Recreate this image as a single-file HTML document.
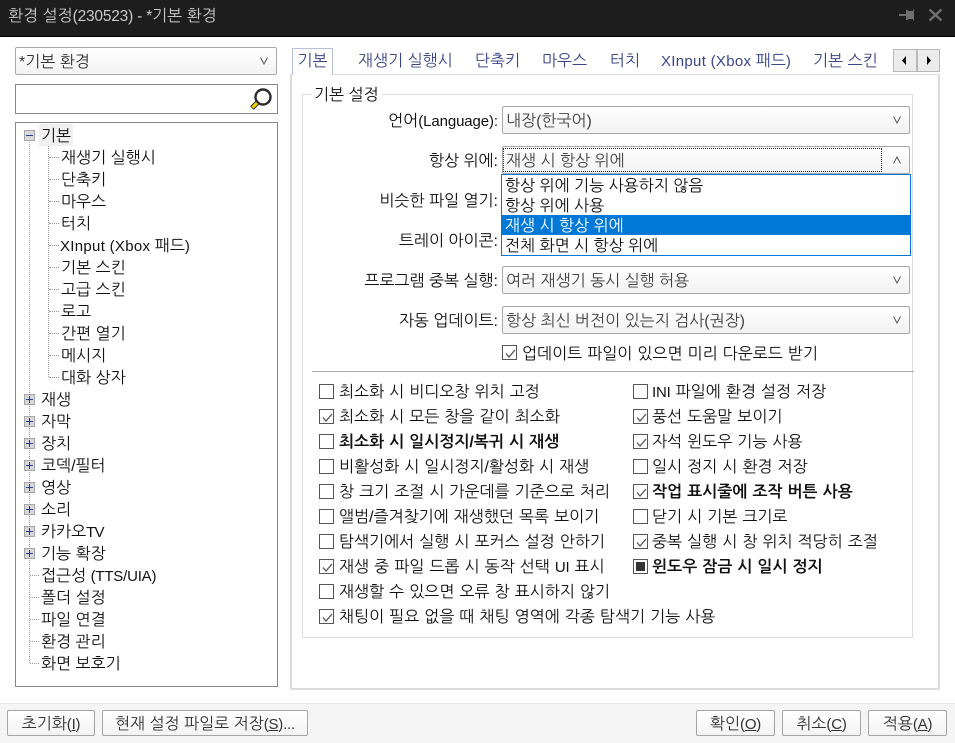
<!DOCTYPE html>
<html lang="ko"><head><meta charset="utf-8">
<style>
html,body{margin:0;padding:0;width:955px;height:743px;overflow:hidden;background:#fff}
body{position:relative;font-family:"Liberation Sans","NanumGothic","Noto Sans CJK KR",sans-serif;font-size:16px;color:#111}
div,span{position:absolute;box-sizing:border-box;white-space:nowrap}
i{font-style:normal;font-size:15px;letter-spacing:-.2px}
i.x{letter-spacing:.3px}
.t{height:22px;line-height:25px;word-spacing:.6px}
.tab{top:50px;height:22px;line-height:24px;color:#3a4688}
.combo{left:502px;width:408px;height:28px;border:1px solid #a9a9a9;border-radius:2px;background:linear-gradient(#fff,#f3f3f3);line-height:29px;padding-left:3px;color:#444}
.combo svg,.lc svg{position:absolute;top:9px;left:390px}
.lab{right:457px;height:22px;line-height:25px;color:#111}
.cb{width:15px;height:15px;border:1px solid #555;background:#fff}
.cb svg{position:absolute;left:1px;top:1px}
.b{font-weight:bold}
.tr{height:22px;line-height:25px}
.ex{left:24px;width:11px;height:11px;background:#d8d8d8;border:1px solid #a5a5a5}
.ex:before{content:"";position:absolute;left:1px;top:4px;width:7px;height:1px;background:#2040a0}
.ex.p:after{content:"";position:absolute;left:4px;top:1px;width:1px;height:7px;background:#2040a0}
.hd{border-top:1px dotted #999;height:1px}
.btn{top:710px;height:26px;border:1px solid #a5a5a5;border-radius:2px;background:linear-gradient(#fff,#f3f3f3);text-align:center;line-height:27px;color:#333}
.dd{left:502px;width:408px;height:20px;line-height:23px;padding-left:3px;color:#111}
u{text-decoration:underline}
</style></head><body>

<div style="left:0;top:0;width:955px;height:37px;background:#1d1d1d;border-bottom:1px solid #000"></div>
<div style="left:8px;top:5px;height:22px;line-height:24px;color:#c9c9c9;font-size:16px">환경 설정<i style="font-size:15.5px">(230523) - *</i>기본 환경</div>
<svg style="position:absolute;left:898px;top:9px" width="18" height="13" viewBox="0 0 18 13"><path d="M1 5h8v2H1z M8 1h2v1h5V0.5h1v11h-1V10h-5v1H8z" fill="#6f6f6f"/></svg>
<svg style="position:absolute;left:928px;top:8px" width="15" height="14" viewBox="0 0 15 14"><path d="M1.5 1.5L13.5 12.5M13.5 1.5L1.5 12.5" stroke="#6f6f6f" stroke-width="2.4" fill="none"/></svg>

<div style="left:0;top:703px;width:955px;height:40px;background:#f5f5f5;border-top:1px solid #e6e6e6"></div>

<!-- left -->
<div class="lc" style="left:15px;top:47px;width:262px;height:28px;border:1px solid #a9a9a9;border-radius:2px;background:linear-gradient(#fff,#f3f3f3);line-height:29px;padding-left:3px;color:#333">*기본 환경<svg style="left:244px" width="8" height="8"><path d="M.5 .5L4 7L7.5 .5" stroke="#555" fill="none"/></svg></div>
<div style="left:15px;top:84px;width:263px;height:30px;border:1px solid #888;background:#fff"></div>
<svg style="position:absolute;left:249px;top:87px" width="25" height="24" viewBox="0 0 25 24"><circle cx="14" cy="10" r="7.5" fill="#fff" stroke="#2c2c2c" stroke-width="2.4"/><path d="M8.5 15.5L3 21" stroke="#222" stroke-width="5"/><path d="M8 16L3.5 20.5" stroke="#f5d800" stroke-width="3"/></svg>
<div style="left:15px;top:122px;width:263px;height:565px;border:1px solid #888;background:#fff"></div>
<div style="left:39px;top:124px;width:34px;height:22px;background:#f0f0f0"></div>

<div style="left:29px;top:142px;width:1px;height:521px;border-left:1px dotted #999"></div>
<div style="left:48px;top:146px;width:1px;height:231px;border-left:1px dotted #999"></div>

<div class="hd" style="left:49px;top:157px;width:10px"></div>
<div class="hd" style="left:49px;top:179px;width:10px"></div>
<div class="hd" style="left:49px;top:201px;width:10px"></div>
<div class="hd" style="left:49px;top:223px;width:10px"></div>
<div class="hd" style="left:49px;top:245px;width:10px"></div>
<div class="hd" style="left:49px;top:267px;width:10px"></div>
<div class="hd" style="left:49px;top:289px;width:10px"></div>
<div class="hd" style="left:49px;top:311px;width:10px"></div>
<div class="hd" style="left:49px;top:333px;width:10px"></div>
<div class="hd" style="left:49px;top:355px;width:10px"></div>
<div class="hd" style="left:49px;top:377px;width:10px"></div>
<div class="hd" style="left:30px;top:575px;width:9px"></div>
<div class="hd" style="left:30px;top:597px;width:9px"></div>
<div class="hd" style="left:30px;top:619px;width:9px"></div>
<div class="hd" style="left:30px;top:641px;width:9px"></div>
<div class="hd" style="left:30px;top:663px;width:9px"></div>

<div class="ex" style="top:130px"></div>
<div class="ex p" style="top:394px"></div>
<div class="ex p" style="top:416px"></div>
<div class="ex p" style="top:438px"></div>
<div class="ex p" style="top:460px"></div>
<div class="ex p" style="top:482px"></div>
<div class="ex p" style="top:504px"></div>
<div class="ex p" style="top:526px"></div>
<div class="ex p" style="top:548px"></div>

<div class="tr" style="left:41px;top:124px">기본</div>
<div class="tr" style="left:61px;top:146px">재생기 실행시</div>
<div class="tr" style="left:61px;top:168px">단축키</div>
<div class="tr" style="left:61px;top:190px">마우스</div>
<div class="tr" style="left:61px;top:212px">터치</div>
<div class="tr" style="left:60px;top:234px"><i class="x">XInput (Xbox </i>패드<i>)</i></div>
<div class="tr" style="left:61px;top:256px">기본 스킨</div>
<div class="tr" style="left:61px;top:278px">고급 스킨</div>
<div class="tr" style="left:61px;top:300px">로고</div>
<div class="tr" style="left:61px;top:322px">간편 열기</div>
<div class="tr" style="left:61px;top:344px">메시지</div>
<div class="tr" style="left:61px;top:366px">대화 상자</div>
<div class="tr" style="left:41px;top:388px">재생</div>
<div class="tr" style="left:41px;top:410px">자막</div>
<div class="tr" style="left:41px;top:432px">장치</div>
<div class="tr" style="left:41px;top:454px">코덱/필터</div>
<div class="tr" style="left:41px;top:476px">영상</div>
<div class="tr" style="left:41px;top:498px">소리</div>
<div class="tr" style="left:41px;top:520px">카카오<i style="letter-spacing:-.8px">TV</i></div>
<div class="tr" style="left:41px;top:542px">기능 확장</div>
<div class="tr" style="left:41px;top:564px">접근성 <i>(TTS/UIA)</i></div>
<div class="tr" style="left:41px;top:586px">폴더 설정</div>
<div class="tr" style="left:41px;top:608px">파일 연결</div>
<div class="tr" style="left:41px;top:630px">환경 관리</div>
<div class="tr" style="left:41px;top:652px">화면 보호기</div>

<!-- tabs & panel -->
<div style="left:290px;top:74px;width:650px;height:616px;border:2px solid #dcdcdc;border-top-width:1px;background:#fff"></div>
<div style="left:292px;top:48px;width:41px;height:27px;border:1px solid #b5c0dc;border-bottom:0;background:#fff;text-align:center;line-height:25px;color:#3a4688">기본</div>
<div class="tab" style="left:358px">재생기 실행시</div>
<div class="tab" style="left:475px">단축키</div>
<div class="tab" style="left:542px">마우스</div>
<div class="tab" style="left:610px">터치</div>
<div class="tab" style="left:661px"><i class="x">XInput (Xbox </i>패드<i>)</i></div>
<div class="tab" style="left:813px">기본 스킨</div>
<div style="left:893px;top:49px;width:47px;height:23px;background:#ececec;border:1px solid #b8b8b8"></div>
<div style="left:916px;top:49px;width:2px;height:23px;background:#b8b8b8"></div>
<svg style="position:absolute;left:901px;top:55px" width="8" height="11"><path d="M5 1v9L1 5.5z" fill="#000"/></svg>
<svg style="position:absolute;left:925px;top:55px" width="8" height="11"><path d="M2 1v9L6 5.5z" fill="#000"/></svg>

<!-- group -->
<div style="left:302px;top:94px;width:611px;height:544px;border:1px solid #dcdcdc"></div>
<div style="left:311px;top:84px;height:22px;line-height:24px;background:#fff;padding:0 3px">기본 설정</div>

<div class="lab" style="top:109px">언어<i style="letter-spacing:-.1px">(Language):</i></div>
<div class="lab" style="top:149px">항상 위에:</div>
<div class="lab" style="top:189px">비슷한 파일 열기:</div>
<div class="lab" style="top:229px">트레이 아이콘:</div>
<div class="lab" style="top:269px">프로그램 중복 실행:</div>
<div class="lab" style="top:309px">자동 업데이트:</div>

<div class="combo" style="top:106px">내장(한국어)<svg width="8" height="8"><path d="M.5 .5L4 7L7.5 .5" stroke="#555" fill="none"/></svg></div>
<div class="combo" style="top:146px">재생 시 항상 위에<svg width="8" height="8"><path d="M.5 7.5L4 1L7.5 7.5" stroke="#555" fill="none"/></svg></div>
<div style="left:503px;top:148px;width:379px;height:24px;border:1px dotted #333"></div>
<div class="combo" style="top:266px">여러 재생기 동시 실행 허용<svg width="8" height="8"><path d="M.5 .5L4 7L7.5 .5" stroke="#555" fill="none"/></svg></div>
<div class="combo" style="top:306px">항상 최신 버전이 있는지 검사(권장)<svg width="8" height="8"><path d="M.5 .5L4 7L7.5 .5" stroke="#555" fill="none"/></svg></div>

<!-- dropdown -->
<div style="left:501px;top:174px;width:410px;height:82px;border:1px solid #0078d7;background:#fff"></div>
<div class="dd" style="top:175px">항상 위에 기능 사용하지 않음</div>
<div class="dd" style="top:195px">항상 위에 사용</div>
<div class="dd" style="top:215px;background:#0078d7;color:#fff">재생 시 항상 위에</div>
<div class="dd" style="top:235px">전체 화면 시 항상 위에</div>

<div class="cb" style="left:502px;top:345px"><svg width="13" height="13"><path d="M2 6.5L5 10L11 3" stroke="#555" stroke-width="1.3" fill="none"/></svg></div>
<div class="t" style="left:522px;top:342px">업데이트 파일이 있으면 미리 다운로드 받기</div>
<div style="left:312px;top:371px;width:602px;height:1px;background:#aaa"></div>

<!-- left col -->
<div class="cb" style="left:319px;top:384px"></div><div class="t" style="left:339px;top:380px">최소화 시 비디오창 위치 고정</div>
<div class="cb" style="left:319px;top:409px"><svg width="13" height="13"><path d="M2 6.5L5 10L11 3" stroke="#555" stroke-width="1.3" fill="none"/></svg></div><div class="t" style="left:339px;top:405px">최소화 시 모든 창을 같이 최소화</div>
<div class="cb" style="left:319px;top:434px"></div><div class="t b" style="left:339px;top:430px">최소화 시 일시정지/복귀 시 재생</div>
<div class="cb" style="left:319px;top:459px"></div><div class="t" style="left:339px;top:455px">비활성화 시 일시정지/활성화 시 재생</div>
<div class="cb" style="left:319px;top:484px"></div><div class="t" style="left:339px;top:480px">창 크기 조절 시 가운데를 기준으로 처리</div>
<div class="cb" style="left:319px;top:509px"></div><div class="t" style="left:339px;top:505px">앨범/즐겨찾기에 재생했던 목록 보이기</div>
<div class="cb" style="left:319px;top:534px"></div><div class="t" style="left:339px;top:530px">탐색기에서 실행 시 포커스 설정 안하기</div>
<div class="cb" style="left:319px;top:559px"><svg width="13" height="13"><path d="M2 6.5L5 10L11 3" stroke="#555" stroke-width="1.3" fill="none"/></svg></div><div class="t" style="left:339px;top:555px">재생 중 파일 드롭 시 동작 선택 <i>UI</i> 표시</div>
<div class="cb" style="left:319px;top:584px"></div><div class="t" style="left:339px;top:580px">재생할 수 있으면 오류 창 표시하지 않기</div>
<div class="cb" style="left:319px;top:609px"><svg width="13" height="13"><path d="M2 6.5L5 10L11 3" stroke="#555" stroke-width="1.3" fill="none"/></svg></div><div class="t" style="left:339px;top:605px">채팅이 필요 없을 때 채팅 영역에 각종 탐색기 기능 사용</div>

<!-- right col -->
<div class="cb" style="left:633px;top:384px"></div><div class="t" style="left:652px;top:380px"><i>INI</i> 파일에 환경 설정 저장</div>
<div class="cb" style="left:633px;top:409px"><svg width="13" height="13"><path d="M2 6.5L5 10L11 3" stroke="#555" stroke-width="1.3" fill="none"/></svg></div><div class="t" style="left:652px;top:405px">풍선 도움말 보이기</div>
<div class="cb" style="left:633px;top:434px"><svg width="13" height="13"><path d="M2 6.5L5 10L11 3" stroke="#555" stroke-width="1.3" fill="none"/></svg></div><div class="t" style="left:652px;top:430px">자석 윈도우 기능 사용</div>
<div class="cb" style="left:633px;top:459px"></div><div class="t" style="left:652px;top:455px">일시 정지 시 환경 저장</div>
<div class="cb" style="left:633px;top:484px"><svg width="13" height="13"><path d="M2 6.5L5 10L11 3" stroke="#555" stroke-width="1.3" fill="none"/></svg></div><div class="t b" style="left:652px;top:480px">작업 표시줄에 조작 버튼 사용</div>
<div class="cb" style="left:633px;top:509px"></div><div class="t" style="left:652px;top:505px">닫기 시 기본 크기로</div>
<div class="cb" style="left:633px;top:534px"><svg width="13" height="13"><path d="M2 6.5L5 10L11 3" stroke="#555" stroke-width="1.3" fill="none"/></svg></div><div class="t" style="left:652px;top:530px">중복 실행 시 창 위치 적당히 조절</div>
<div class="cb" style="left:633px;top:559px"><span style="left:2px;top:2px;width:9px;height:9px;background:#333"></span></div><div class="t b" style="left:652px;top:555px">윈도우 잠금 시 일시 정지</div>

<!-- buttons -->
<div class="btn" style="left:7px;width:88px">초기화<i>(<u>I</u>)</i></div>
<div class="btn" style="left:102px;width:206px">현재 설정 파일로 저장<i>(<u>S</u>)...</i></div>
<div class="btn" style="left:696px;width:79px">확인<i>(<u>O</u>)</i></div>
<div class="btn" style="left:782px;width:79px">취소<i>(<u>C</u>)</i></div>
<div class="btn" style="left:868px;width:79px">적용<i>(<u>A</u>)</i></div>

</body></html>
